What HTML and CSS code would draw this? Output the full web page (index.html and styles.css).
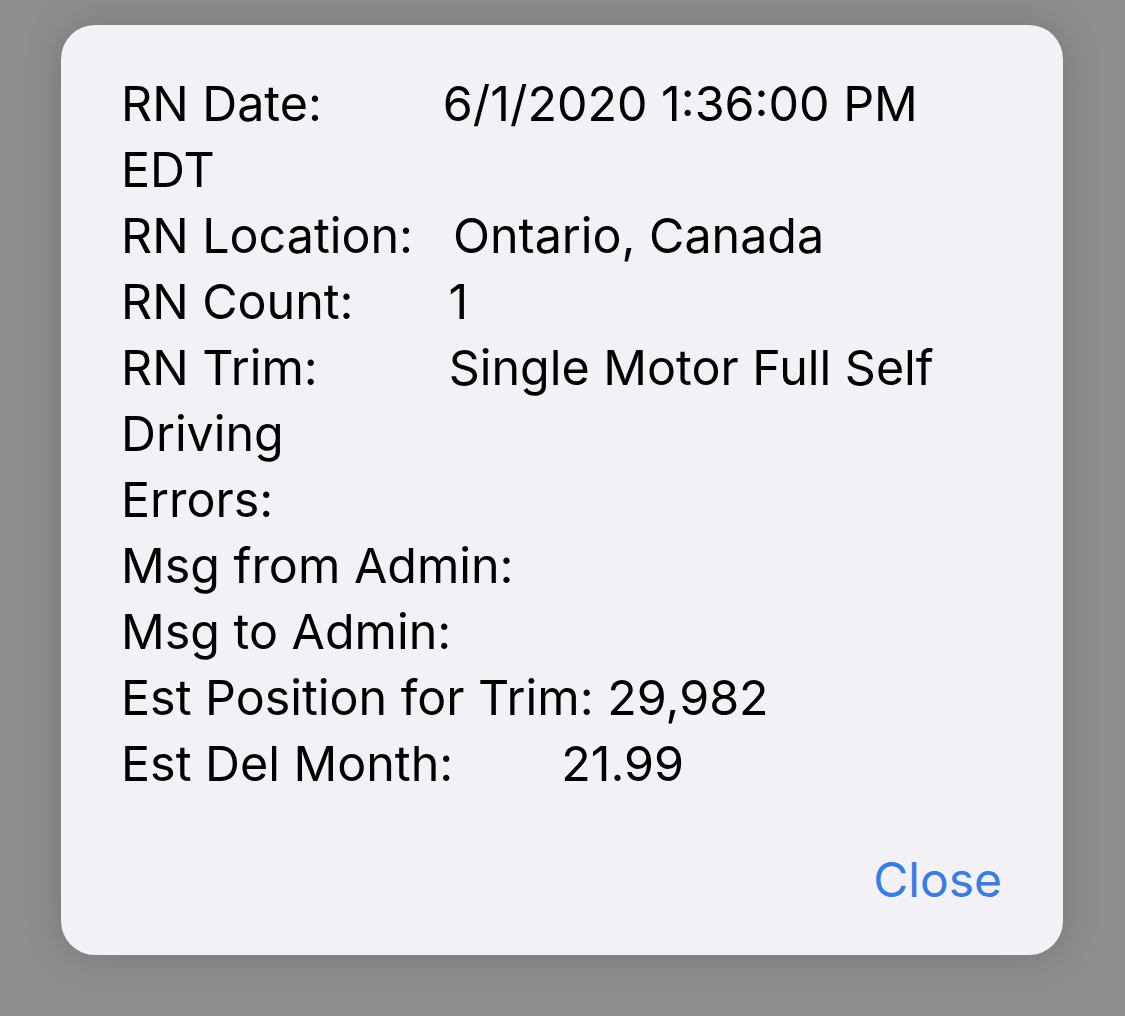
FILE: index.html
```
<!DOCTYPE html>
<html>
<head>
<meta charset="utf-8">
<link rel="stylesheet" href="styles.css">
</head>
<body>
<div class="card">
  <div class="info">
    <p class="row"><span class="label l-date">RN Date:</span>6/1/2020 1:36:00 PM EDT</p>
    <p class="row"><span class="label l-loc">RN Location:</span>Ontario, Canada</p>
    <p class="row"><span class="label l-count">RN Count:</span>1</p>
    <p class="row"><span class="label l-trim">RN Trim:</span>Single Motor Full Self Driving</p>
    <p class="row"><span class="label">Errors:</span></p>
    <p class="row"><span class="label">Msg from Admin:</span></p>
    <p class="row"><span class="label">Msg to Admin:</span></p>
    <p class="row"><span class="label">Est Position for Trim:</span> 29,982</p>
    <p class="row"><span class="label l-month">Est Del Month:</span>21.99</p>
  </div>
  <div class="actions">
    <span class="close">Close</span>
  </div>
</div>
</body>
</html>
```
FILE: styles.css
```
html, body {
  margin: 0;
  padding: 0;
}
body {
  background: #8e8e8e;
  width: 1125px;
  height: 1016px;
  overflow: hidden;
  font-family: Inter, "Noto Sans", sans-serif;
}
.card {
  margin: 25px 0 0 61px;
  width: 1002px;
  height: 930px;
  box-sizing: border-box;
  background: #f1f1f6;
  border-radius: 34px;
  box-shadow: 0 0 40px rgba(0, 0, 0, 0.18);
  padding: 46px 61px 0 60px;
  display: flex;
  flex-direction: column;
}
.info {
  color: #000;
  font-size: 48.4px;
  line-height: 66px;
}
.row {
  margin: 0;
}
.label {
  display: inline-block;
}
.l-date { margin-right: 121px; }
.l-loc { margin-right: 40px; }
.l-count { margin-right: 95px; }
.l-trim { margin-right: 131px; }
.l-month { margin-right: 108px; }
.actions {
  display: flex;
  justify-content: flex-end;
  margin-top: 50px;
}
.close {
  color: #3a7ddc;
  font-size: 48px;
  line-height: 66px;
}
```
